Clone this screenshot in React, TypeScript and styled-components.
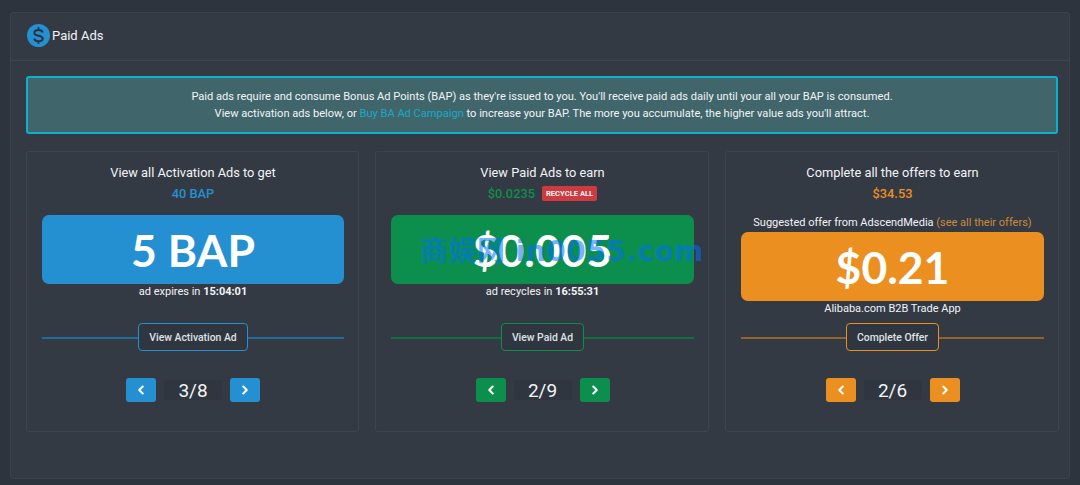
import React from 'react';
import styled, { createGlobalStyle } from 'styled-components';
import { ChevronLeft, ChevronRight } from 'lucide-react';

const colors = {
  blue: '#2490d2',
  green: '#0c8f4c',
  orange: '#ec8f21',
};

const dimColors = {
  blue: '#1f6c9f',
  green: '#10703f',
  orange: '#94622a',
};

type Tone = keyof typeof colors;

const offers = [
  {
    tone: 'blue' as Tone,
    title: 'View all Activation Ads to get',
    amount: '40 BAP',
    big: '5 BAP',
    footer: (
      <>
        ad expires in <b>15:04:01</b>
      </>
    ),
    action: 'View Activation Ad',
    page: '3/8',
  },
  {
    tone: 'green' as Tone,
    title: 'View Paid Ads to earn',
    amount: '$0.0235',
    recycle: true,
    big: '$0.005',
    footer: (
      <>
        ad recycles in <b>16:55:31</b>
      </>
    ),
    action: 'View Paid Ad',
    page: '2/9',
  },
  {
    tone: 'orange' as Tone,
    title: 'Complete all the offers to earn',
    amount: '$34.53',
    suggested: true,
    big: '$0.21',
    footer: <>Alibaba.com B2B Trade App</>,
    action: 'Complete Offer',
    page: '2/6',
  },
];

const App = () => {
  return (
    <>
      <GlobalStyle />
      <Panel>
        <PanelHeader>
          <svg width="23" height="23" viewBox="0 0 24 24">
            <circle cx="12" cy="12" r="12" fill="#2490d2" />
            <path
              d="M16.4 9C16 7.2 14.3 6.3 12 6.3c-2.6 0-4.3 1.2-4.3 3 0 4 8.7 1.9 8.7 5.8 0 1.8-1.8 2.9-4.4 2.9-2.4 0-4.1-1-4.5-2.9M12 3.5v2.8M12 18v2.6"
              fill="none"
              stroke="#2b323c"
              strokeWidth="2"
            />
          </svg>
          <PanelTitle>Paid Ads</PanelTitle>
        </PanelHeader>
        <PanelBody>
          <Notice>
            Paid ads require and consume Bonus Ad Points (BAP) as they're issued to you. You'll
            receive paid ads daily until your all your BAP is consumed.
            <br />
            View activation ads below, or <NoticeLink>Buy BA Ad Campaign</NoticeLink> to increase
            your BAP. The more you accumulate, the higher value ads you'll attract.
          </Notice>
          <CardGrid>
            {offers.map((item) => (
              <Card key={item.title}>
                <CardTop>
                  <CardTitle>{item.title}</CardTitle>
                  <AmountRow>
                    <Amount $tone={item.tone}>{item.amount}</Amount>
                    {item.recycle && <RecycleBadge>RECYCLE ALL</RecycleBadge>}
                  </AmountRow>
                  {item.suggested && (
                    <Suggested>
                      Suggested offer from AdscendMedia <SeeAll>(see all their offers)</SeeAll>
                    </Suggested>
                  )}
                  <BigValue $tone={item.tone} $tight={item.suggested}>
                    {item.big}
                  </BigValue>
                  <ValueFooter>{item.footer}</ValueFooter>
                </CardTop>
                <ActionRow $tone={item.tone}>
                  <ActionButton $tone={item.tone}>{item.action}</ActionButton>
                </ActionRow>
                <Pager>
                  <PageButton $tone={item.tone}>
                    <ChevronLeft size={14} strokeWidth={3.5} />
                  </PageButton>
                  <PageCount>{item.page}</PageCount>
                  <PageButton $tone={item.tone}>
                    <ChevronRight size={14} strokeWidth={3.5} />
                  </PageButton>
                </Pager>
              </Card>
            ))}
          </CardGrid>
        </PanelBody>
      </Panel>
      <Watermark>商娱网 in0055.com</Watermark>
    </>
  );
};

export default App;

// ========== Styled Components ==========

const GlobalStyle = createGlobalStyle`
  html, body {
    margin: 0;
    height: 485px;
    overflow: hidden;
    background: #2d343e;
    font-family: Roboto, "Noto Sans CJK SC", sans-serif;
    color: #f2f4f6;
  }
`;

const Panel = styled.div`
  box-sizing: border-box;
  width: 1060px;
  height: 467px;
  margin: 12px 10px 0;
  background: #343a44;
  border: 1px solid #3b424d;
  border-radius: 3px;
`;

const PanelHeader = styled.div`
  box-sizing: border-box;
  height: 48px;
  display: flex;
  align-items: center;
  gap: 2px;
  padding: 0 16px 3px;
  border-bottom: 1px solid #3d444f;
`;

const PanelTitle = styled.div`
  font-size: 13px;
  font-weight: 400;
`;

const PanelBody = styled.div`
  padding: 15px 11px 0 15px;
`;

const Notice = styled.div`
  box-sizing: border-box;
  height: 58px;
  padding: 10px 0 0;
  background: #40666c;
  border: 2px solid #0cb1cc;
  border-radius: 3px;
  text-align: center;
  font-size: 11.08px;
  line-height: 17px;
`;

const NoticeLink = styled.span`
  color: #17a9c6;
`;

const CardGrid = styled.div`
  display: grid;
  grid-template-columns: 333px 334px 334px;
  gap: 16px;
  margin-top: 17px;
`;

const Card = styled.div`
  box-sizing: border-box;
  height: 281px;
  padding: 13px 14px 0 15px;
  display: flex;
  flex-direction: column;
  align-items: stretch;
  border: 1px solid #3d444f;
  border-radius: 3px;
`;

const CardTop = styled.div`
  height: 158px;
`;

const CardTitle = styled.div`
  font-size: 12.8px;
  line-height: 16px;
  text-align: center;
`;

const AmountRow = styled.div`
  height: 20px;
  margin-top: 2px;
  display: flex;
  align-items: center;
  justify-content: center;
  gap: 7px;
`;

const Amount = styled.span<{ $tone: Tone }>`
  font-size: 12.8px;
  font-weight: 500;
  color: ${(p) => colors[p.$tone]};
`;

const RecycleBadge = styled.span`
  padding: 3px 4px;
  background: #cf3a40;
  border-radius: 2px;
  font-size: 7.6px;
  line-height: 9px;
  font-weight: 700;
`;

const Suggested = styled.div`
  height: 18px;
  margin-top: 11px;
  font-size: 11px;
  line-height: 18px;
  text-align: center;
`;

const SeeAll = styled.span`
  color: #c98a3c;
`;

const BigValue = styled.div<{ $tone: Tone; $tight?: boolean }>`
  height: 69px;
  margin-top: ${(p) => (p.$tight ? '0' : '12px')};
  display: flex;
  align-items: center;
  justify-content: center;
  background: ${(p) => colors[p.$tone]};
  border-radius: 7px;
  font-family: Lato, sans-serif;
  font-size: 44.5px;
  font-weight: 700;
  color: #fff;
`;

const ValueFooter = styled.div`
  height: 17px;
  font-size: 11px;
  line-height: 16px;
  text-align: center;
`;

const ActionRow = styled.div<{ $tone: Tone }>`
  position: relative;
  height: 28px;
  display: flex;
  justify-content: center;

  &::before {
    content: '';
    position: absolute;
    left: 0;
    right: 0;
    top: 14px;
    height: 2px;
    background: ${(p) => dimColors[p.$tone]};
  }
`;

const ActionButton = styled.div<{ $tone: Tone }>`
  position: relative;
  box-sizing: border-box;
  height: 28px;
  padding: 0 10px;
  display: flex;
  align-items: center;
  background: #2f3640;
  border: 1px solid ${(p) => colors[p.$tone]};
  border-radius: 4px;
  font-size: 10.4px;
  font-weight: 500;
  color: #dfe2e6;
`;

const Pager = styled.div`
  margin-top: 27px;
  display: flex;
  align-items: center;
  justify-content: center;
  gap: 8px;
`;

const PageButton = styled.div<{ $tone: Tone }>`
  width: 30px;
  height: 24px;
  display: flex;
  align-items: center;
  justify-content: center;
  background: ${(p) => colors[p.$tone]};
  border-radius: 3px;
  color: #fff;
`;

const PageCount = styled.div`
  width: 58px;
  height: 20px;
  display: flex;
  align-items: center;
  justify-content: center;
  background: #2f3640;
  border-radius: 3px;
  font-size: 19px;
`;

const Watermark = styled.div`
  position: absolute;
  left: 420px;
  top: 234px;
  font-family: "DejaVu Sans", "Noto Sans CJK SC", sans-serif;
  font-size: 28px;
  letter-spacing: 0.5px;
  line-height: 36px;
  font-weight: 700;
  color: rgba(0, 110, 255, 0.55);
  white-space: nowrap;
`;
